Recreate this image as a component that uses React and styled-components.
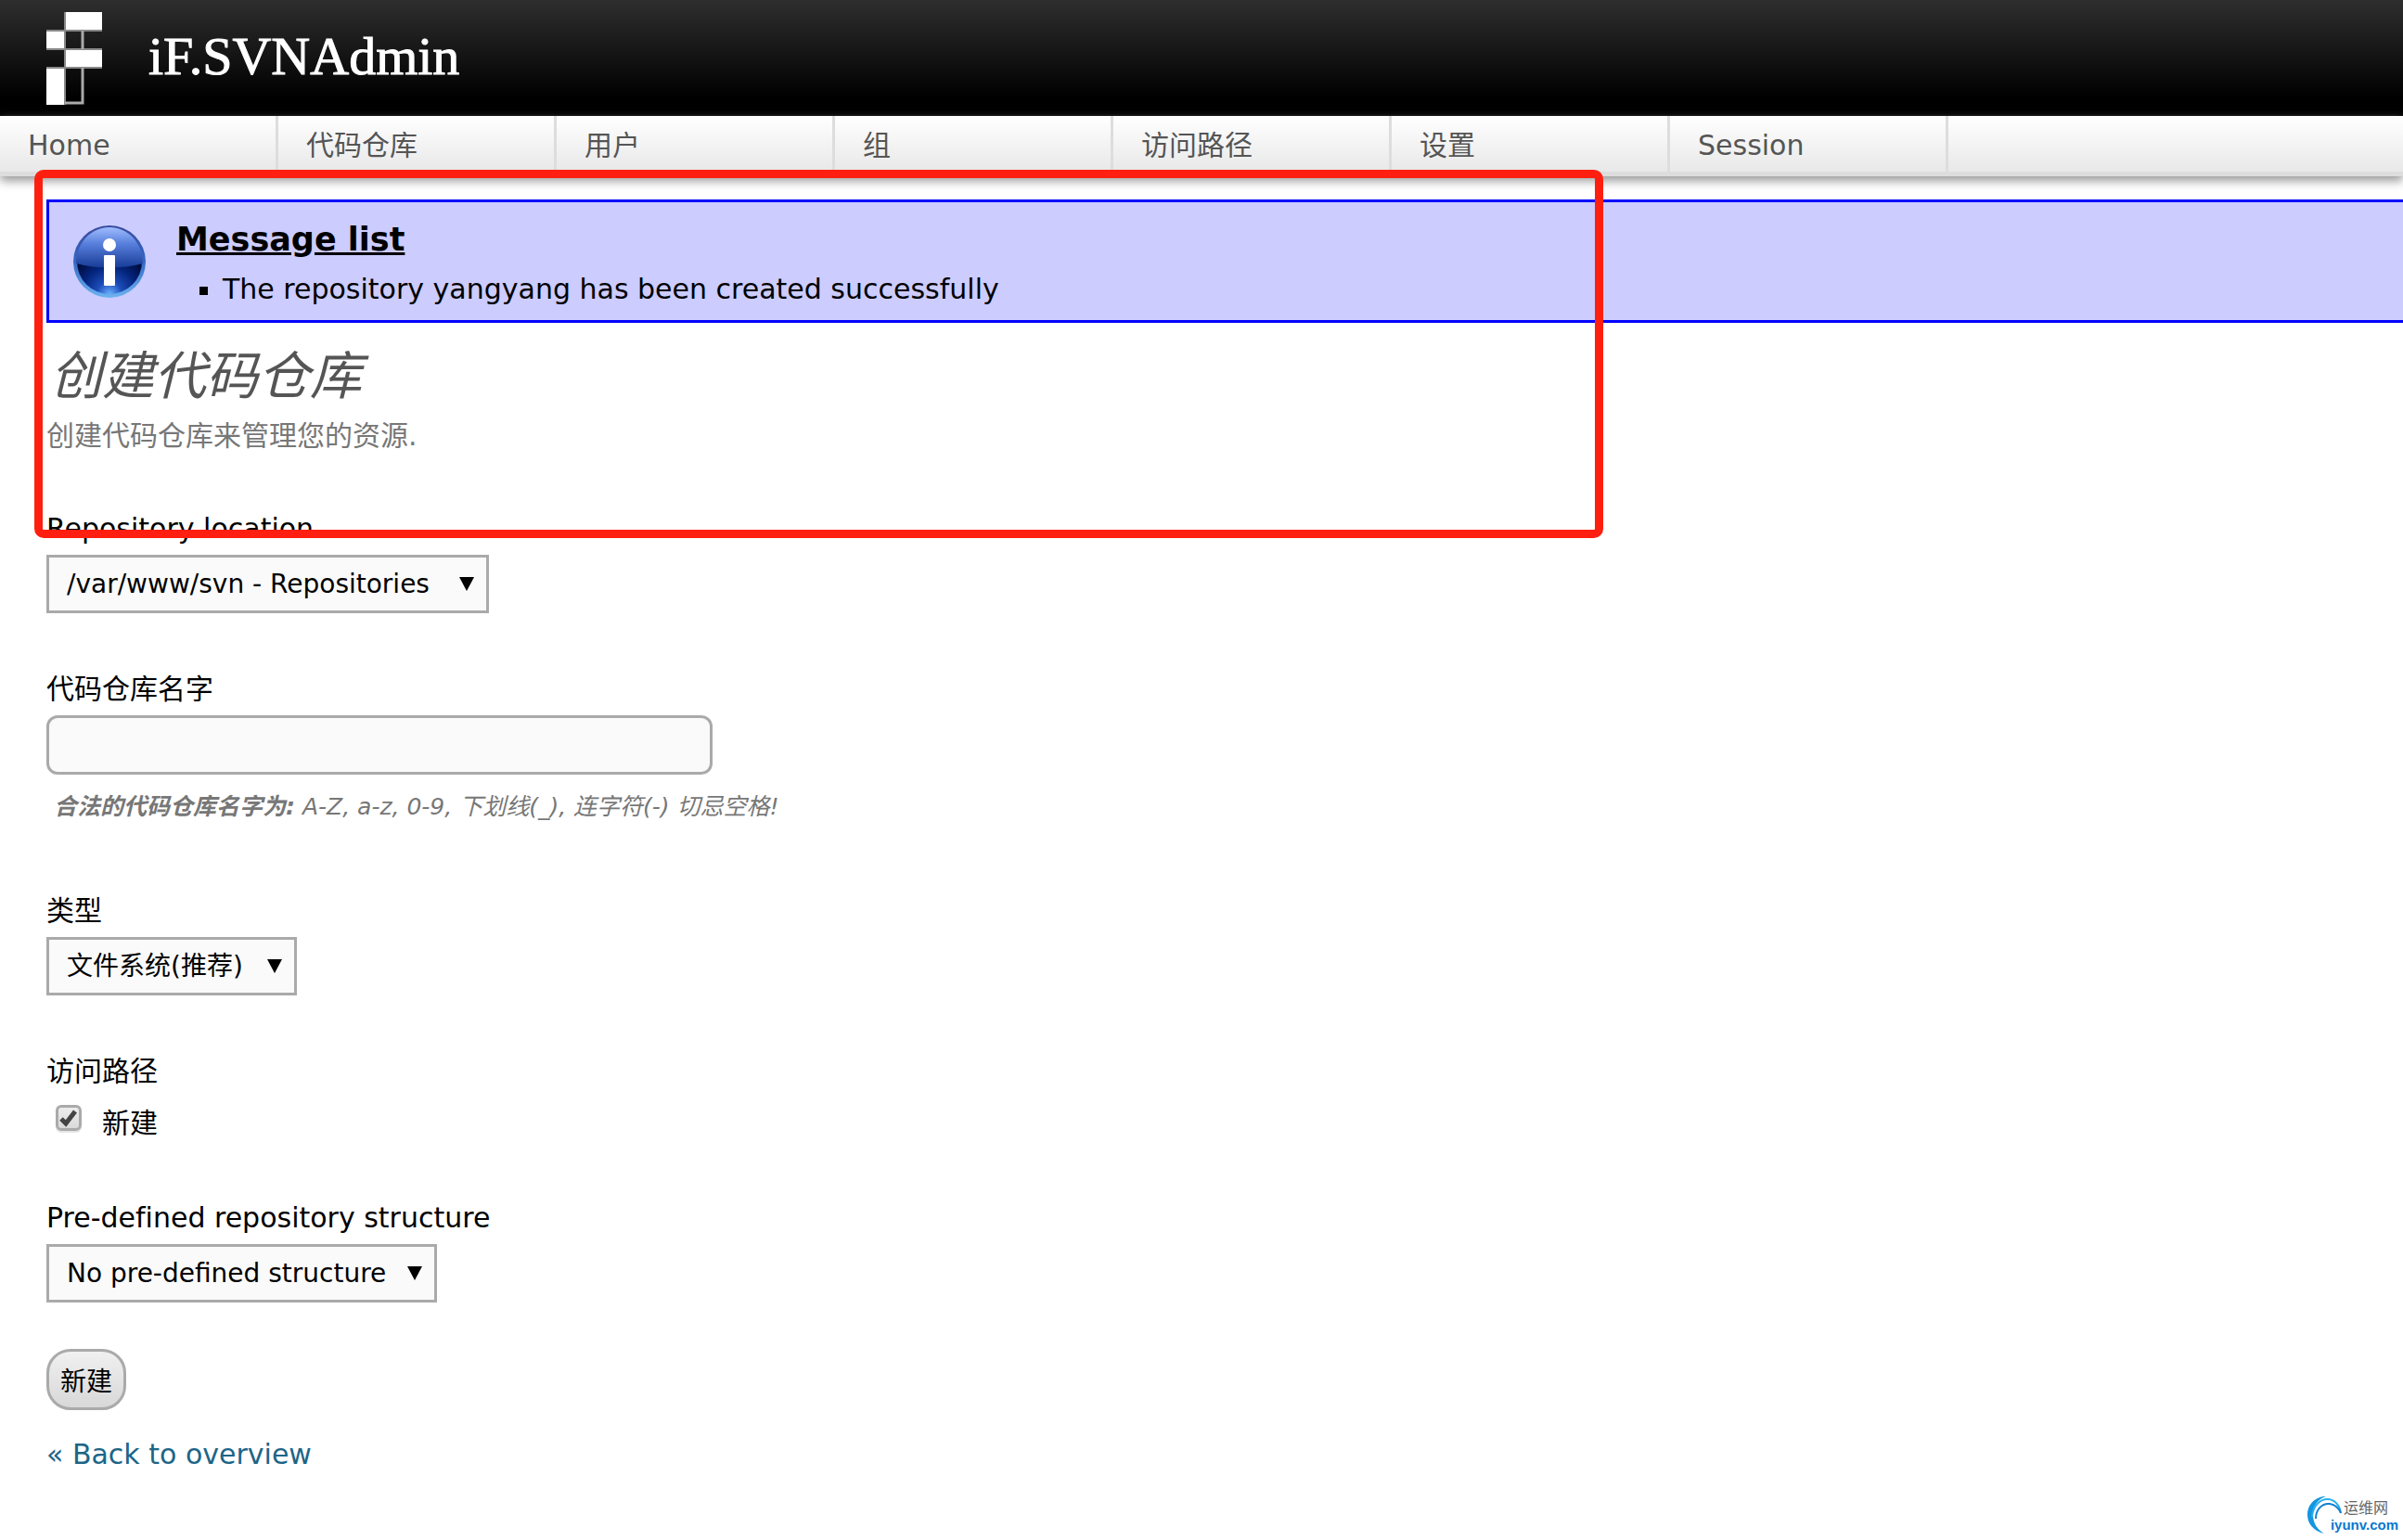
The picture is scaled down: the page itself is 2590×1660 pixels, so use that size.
import React, { useState } from 'react';
import styled, { createGlobalStyle } from 'styled-components';

const sans = `"DejaVu Sans", "Noto Sans CJK SC", sans-serif`;
const serif = `"Liberation Serif", "Noto Sans CJK SC", serif`;

const GlobalStyle = createGlobalStyle`
  * {
    box-sizing: border-box;
  }

  body {
    margin: 0;
    background: #fff;
    color: #000;
    font-family: ${sans};
    font-size: 30px;
    font-variant-ligatures: none;
    line-height: 40px;
  }
`;

const Page = styled.div`
  position: relative;
  min-height: 100vh;
`;

const Header = styled.header`
  display: flex;
  align-items: center;
  gap: 48px;
  height: 125px;
  padding: 0 50px;
  background: linear-gradient(#2e2e2e, #000 85%);
`;

const Brand = styled.span`
  padding-bottom: 4px;
  color: #fff;
  font-family: ${serif};
  font-size: 58px;
  line-height: 64px;
  -webkit-text-stroke: 1px #fff;
`;

const Nav = styled.nav`
  position: relative;
  display: flex;
  height: 65px;
  border-bottom: 5px solid #ddd;
  background: linear-gradient(#fff, #e8e8e8);
  box-shadow: 0 5px 10px #999;
`;

const NavLink = styled.a`
  width: 300px;
  padding-left: 30px;
  border-right: 3px solid #ddd;
  color: #555;
  line-height: 64px;
  text-decoration: none;
`;

const Main = styled.main`
  padding: 25px 0 60px 50px;
`;

const Messages = styled.section`
  display: flex;
  gap: 32px;
  height: 133px;
  padding: 20px 25px;
  border: 3px solid #00f;
  border-right: 0;
  background: #ccf;
`;

const InfoSvg = styled.svg`
  flex: none;
  width: 80px;
  height: 80px;
  margin-top: 4px;
`;

const MessageTitle = styled.h2`
  margin: 0;
  font-size: 35px;
  line-height: 40px;
  text-decoration: underline;
`;

const MessageItems = styled.ul`
  margin: 0;
  padding-left: 50px;
  line-height: 68px;
  list-style: square;
`;

const Title = styled.h1`
  margin: 26px 0 0;
  padding-left: 4px;
  color: #555;
  font-family: ${serif};
  font-size: 56px;
  font-style: italic;
  font-weight: 400;
  line-height: 64px;
`;

const Intro = styled.p`
  margin: 12px 0 0;
  color: #777;
`;

const Form = styled.form`
  margin: 60px 0 28px;
`;

const Fields = styled.div`
  display: flex;
  flex-direction: column;
  gap: 62px;
  margin-bottom: 50px;
`;

const Field = styled.div`
  display: flex;
  flex-direction: column;
  align-items: flex-start;
  gap: 8px;
`;

const SelectBox = styled.div`
  display: inline-grid;
  align-items: center;

  > * {
    grid-area: 1 / 1;
  }
`;

const StyledSelect = styled.select`
  appearance: none;
  width: ${({ $width }) => $width}px;
  height: 63px;
  padding: 0 40px 0 19px;
  border: 3px solid #aaa;
  border-radius: 0;
  background: #fafafa;
  color: #000;
  font-family: ${sans};
  font-size: 28px;
`;

const Arrow = styled.svg`
  justify-self: end;
  width: 16px;
  height: 15px;
  margin-right: 16px;
  pointer-events: none;
`;

const TextInput = styled.input`
  width: 718px;
  height: 64px;
  padding: 0 16px;
  border: 3px solid #aaa;
  border-radius: 12px;
  background: #fafafa;
  font-family: ${sans};
  font-size: 28px;
`;

const Hint = styled.small`
  padding: 11px 0 14px 8px;
  color: #777;
  font-size: 25px;
  font-style: italic;
  line-height: 32px;
`;

const CheckRow = styled.div`
  display: flex;
  align-items: flex-start;
  gap: 22px;
  padding: 8px 0 0 10px;
`;

const CheckBox = styled.span`
  display: grid;

  > * {
    grid-area: 1 / 1;
  }
`;

const CheckInput = styled.input`
  appearance: none;
  width: 28px;
  height: 28px;
  margin: 0;
  border: 3px solid #aaa;
  border-radius: 6px;
  background: linear-gradient(#ececec, #dadada);
  box-shadow: 0 2px 1px #e4e4e4;
`;

const CheckMark = styled.svg`
  width: 28px;
  height: 28px;
  pointer-events: none;
`;

const SubmitButton = styled.button`
  display: block;
  height: 66px;
  padding: 0 12px;
  border: 3px solid #aaa;
  border-radius: 26px;
  background: linear-gradient(#f0f0f0, #d8d8d8);
  color: #000;
  font-family: ${sans};
  font-size: 28px;
`;

const BackLink = styled.a`
  color: #1d6587;
  text-decoration: none;
`;

const Highlight = styled.div`
  position: absolute;
  top: 183px;
  left: 37px;
  width: 1691px;
  height: 397px;
  border: 9px solid #ff1f10;
  border-radius: 10px;
  pointer-events: none;
`;

const Watermark = styled.div`
  position: absolute;
  right: 5px;
  bottom: 5px;
  width: 98px;
  height: 42px;
  padding-top: 4px;
  line-height: 18px;
  text-align: right;
`;

const Swirl = styled.svg`
  position: absolute;
  top: 0;
  left: 0;
`;

const WatermarkName = styled.div`
  padding-right: 11px;
  color: #666;
  font-size: 16px;
`;

const WatermarkSite = styled.div`
  position: relative;
  color: #0a78d0;
  font-family: "Liberation Sans", sans-serif;
  font-size: 15px;
  font-weight: 700;
`;

const navItems = ['Home', '代码仓库', '用户', '组', '访问路径', '设置', 'Session'];

const Logo = () => (
  <svg width="62" height="100" viewBox="0 0 62 100" aria-hidden="true">
    <path fill="#fff" d="M20 0h40v20H20zM0 20h20v20H0zM20 40h40v20H20zM0 60h20v40H0z" />
    <path fill="none" stroke="#888" strokeWidth="2" d="M20 0v100M0 20h60M0 40h60M0 60h60" />
    <path fill="none" stroke="#aaa" strokeWidth="3" d="M39 20v20M39 60v38H20" />
  </svg>
);

const InfoIcon = () => (
  <InfoSvg viewBox="0 0 80 80" aria-hidden="true">
    <defs>
      <linearGradient id="ring" x1="0" y1="0" x2="0" y2="1">
        <stop offset="0" stopColor="#3a4a9c" />
        <stop offset="0.5" stopColor="#3468c4" />
        <stop offset="1" stopColor="#6cb4f0" />
      </linearGradient>
      <radialGradient id="base" cx="0.5" cy="1" r="0.65">
        <stop offset="0" stopColor="#6ab0ff" />
        <stop offset="0.3" stopColor="#1c4cb8" />
        <stop offset="0.65" stopColor="#04247c" />
        <stop offset="1" stopColor="#000c3c" />
      </radialGradient>
      <linearGradient id="gloss" x1="0" y1="0" x2="0" y2="1">
        <stop offset="0" stopColor="#a0bcff" />
        <stop offset="0.4" stopColor="#5880dc" />
        <stop offset="1" stopColor="#183c98" />
      </linearGradient>
    </defs>
    <circle cx="40" cy="40" r="39" fill="url(#ring)" />
    <circle cx="40" cy="40" r="35" fill="url(#base)" />
    <path d="M4 42C4 20 20 3 40 3s36 17 36 39c-22 6-50 6-72 0z" fill="url(#gloss)" />
    <circle cx="40" cy="22" r="7" fill="#fff" />
    <rect x="34" y="33" width="12" height="33" rx="1" fill="#fff" />
  </InfoSvg>
);

const Select = ({ id, width, option }) => (
  <SelectBox>
    <StyledSelect id={id} $width={width}>
      <option>{option}</option>
    </StyledSelect>
    <Arrow viewBox="0 0 16 15" aria-hidden="true">
      <path d="M0 0h16L8 15z" />
    </Arrow>
  </SelectBox>
);

const App = () => {
  const [create, setCreate] = useState(true);

  return (
    <Page>
      <GlobalStyle />
      <Header>
        <Logo />
        <Brand>iF.SVNAdmin</Brand>
      </Header>
      <Nav>
        {navItems.map((item) => (
          <NavLink href="#" key={item}>{item}</NavLink>
        ))}
      </Nav>

      <Main>
        <Messages>
          <InfoIcon />
          <div>
            <MessageTitle>Message list</MessageTitle>
            <MessageItems>
              <li>The repository yangyang has been created successfully</li>
            </MessageItems>
          </div>
        </Messages>

        <Title>创建代码仓库</Title>
        <Intro>创建代码仓库来管理您的资源.</Intro>

        <Form onSubmit={(e) => e.preventDefault()}>
          <Fields>
            <Field>
              <label htmlFor="location">Repository location</label>
              <Select id="location" width={477} option="/var/www/svn - Repositories" />
            </Field>
            <Field>
              <label htmlFor="name">代码仓库名字</label>
              <TextInput id="name" type="text" />
              <Hint>
                <b>合法的代码仓库名字为:</b> A-Z, a-z, 0-9, 下划线(_), 连字符(-) 切忌空格!
              </Hint>
            </Field>
            <Field>
              <label htmlFor="type">类型</label>
              <Select id="type" width={270} option="文件系统(推荐)" />
            </Field>
            <Field>
              <span>访问路径</span>
              <CheckRow>
                <CheckBox>
                  <CheckInput
                    id="create"
                    type="checkbox"
                    checked={create}
                    onChange={() => setCreate(!create)}
                  />
                  {create && (
                    <CheckMark viewBox="0 0 28 28" aria-hidden="true">
                      <path d="M6 15l5 5L21 7" fill="none" stroke="#444" strokeWidth="5" />
                    </CheckMark>
                  )}
                </CheckBox>
                <label htmlFor="create">新建</label>
              </CheckRow>
            </Field>
            <Field>
              <label htmlFor="structure">Pre-defined repository structure</label>
              <Select id="structure" width={421} option="No pre-defined structure" />
            </Field>
          </Fields>
          <SubmitButton type="submit">新建</SubmitButton>
        </Form>
        <BackLink href="#">« Back to overview</BackLink>
      </Main>

      <Highlight />
      <Watermark>
        <Swirl width="40" height="42" viewBox="0 0 40 42" aria-hidden="true">
          <path d="M18 40C6 37 0 29 0 20 0 8 9 0 20 0 11 3 6 10 6 20c0 9 5 16 12 20z" fill="#1496e0" />
          <path d="M5 22C6 9 15 2 23 3c7 1 12 7 13 15" fill="none" stroke="#2ab0f0" strokeWidth="2" />
          <path d="M9 24c0-10 7-17 15-16 6 1 10 5 12 10" fill="none" stroke="#1080d0" strokeWidth="2" />
        </Swirl>
        <WatermarkName>运维网</WatermarkName>
        <WatermarkSite>iyunv.com</WatermarkSite>
      </Watermark>
    </Page>
  );
};

export default App;
